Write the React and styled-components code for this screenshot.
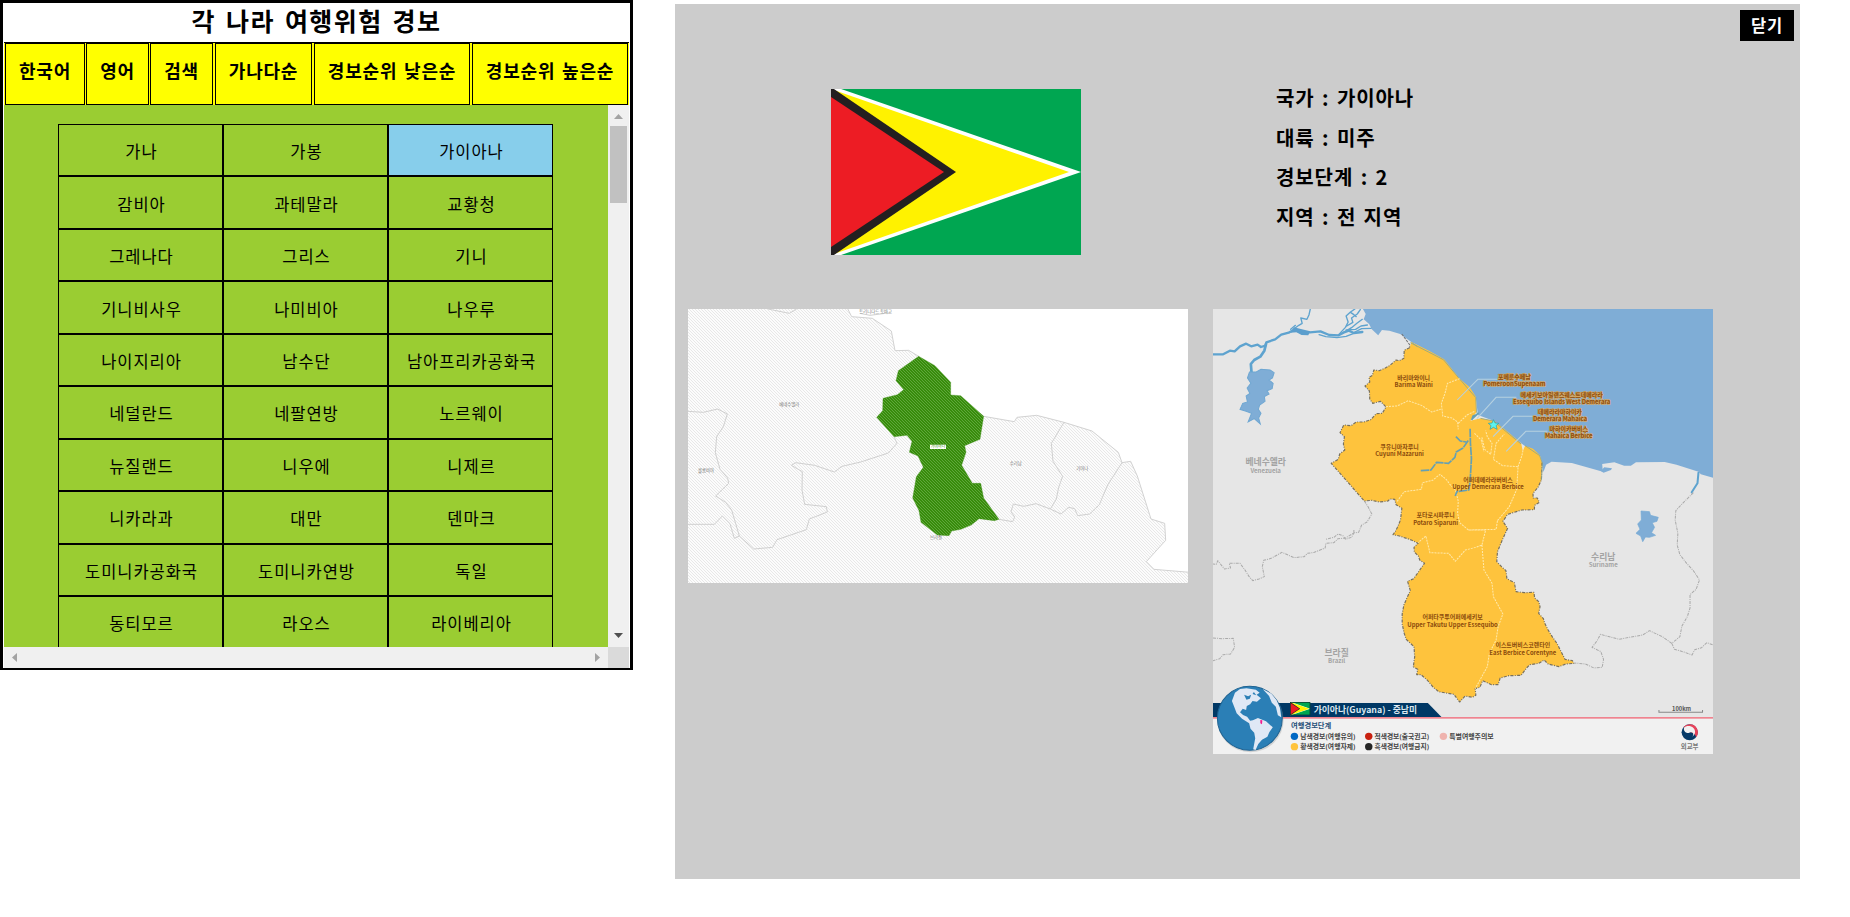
import React from "react";
import styled, { createGlobalStyle } from "styled-components";

const KR = '"Noto Sans CJK KR", "Noto Sans", sans-serif';

const GlobalStyle = createGlobalStyle`
  * { box-sizing: border-box; }
  body { margin: 0; background: #fff; color: #000; font-family: ${KR}; overflow: hidden; }
`;

const Page = styled.div`
  display: flex;
  align-items: flex-start;
  width: 1850px;
  height: 917px;
`;

const ListPanel = styled.section`
  width: 633px;
  height: 670px;
  border: 3px solid #000;
  border-bottom-width: 2px;
  padding: 0 1px;
  display: flex;
  flex-direction: column;
`;

const Title = styled.h1`
  margin: 0;
  height: 40px;
  border-bottom: 1px solid #000;
  font-size: 25px;
  line-height: 35px;
  letter-spacing: 1.4px;
  word-spacing: 3px;
  text-align: center;
  white-space: nowrap;
`;

const Nav = styled.nav`
  display: flex;
  height: 62px;
  padding: 0 1px;
  background: #ff0;
`;

const NavButton = styled.button`
  width: ${(p) => p.$width}px;
  height: 62px;
  margin: 0 ${(p) => p.$gap}px 0 0;
  padding: 0 0 8px;
  border: 1px solid #000;
  background: #ff0;
  color: #000;
  font: 700 18px ${KR};
  letter-spacing: 0.8px;
  word-spacing: 2px;
  white-space: nowrap;
`;

const ScrollArea = styled.div`
  display: grid;
  grid-template-columns: 604px 21px;
  grid-template-rows: 542px 21px;
`;

const ListView = styled.div`
  overflow: hidden;
  background: yellowgreen;
  padding: 19px 0 0 54px;
`;

const CountryGrid = styled.div`
  display: grid;
  grid-template-columns: repeat(3, 165px);
  grid-auto-rows: 52.45px;
`;

const CountryCell = styled.div`
  display: flex;
  align-items: center;
  justify-content: center;
  padding: 2px 0 0 2px;
  border: 1px solid #000;
  background: ${(p) => (p.$active ? "skyblue" : "transparent")};
  font-size: 16.5px;
  letter-spacing: 0.95px;
  white-space: nowrap;
`;

const ScrollTrack = styled.div`
  display: flex;
  flex-direction: ${(p) => (p.$vertical ? "column" : "row")};
  align-items: center;
  justify-content: space-between;
  background: #f0f0f0;
  padding: ${(p) => (p.$vertical ? "9px 0" : "0 8px")};
`;

const ScrollThumb = styled.div`
  width: 17px;
  height: 77px;
  margin: 7px 0 auto;
  background: #c1c1c1;
`;

const ScrollCorner = styled.div`
  background: #dadada;
`;

const Detail = styled.section`
  width: 1125px;
  height: 875px;
  margin: 4px 0 0 42px;
  background: #ccc;
`;

const DetailHeader = styled.header`
  display: flex;
  justify-content: flex-end;
  height: 85px;
  padding: 6px 6px 0;
`;

const CloseButton = styled.button`
  width: 54px;
  height: 31px;
  padding: 0 0 1px;
  border: 0;
  background: #000;
  color: #fff;
  font: 700 16.5px ${KR};
  letter-spacing: 0.8px;
`;

const Summary = styled.div`
  display: flex;
  height: 220px;
  padding-left: 156px;
`;

const Facts = styled.dl`
  margin: -11px 0 0 195px;
`;

const Fact = styled.div`
  height: 39.7px;
  line-height: 39px;
  font-size: 20px;
  font-weight: 700;
  letter-spacing: 0.9px;
  word-spacing: 2px;
  white-space: pre;
`;

const Maps = styled.div`
  display: flex;
  align-items: flex-start;
  gap: 25px;
  padding-left: 13px;
`;

const Drawing = styled.svg`
  display: block;
  flex: none;
  overflow: hidden;
  font-family: ${KR};
`;

const NAV = [
  ["한국어", 80, 1],
  ["영어", 63, 1],
  ["검색", 63, 2],
  ["가나다순", 97, 2],
  ["경보순위 낮은순", 156, 2],
  ["경보순위 높은순", 156, 0],
];

const COUNTRIES = [
  "가나", "가봉", "가이아나",
  "감비아", "과테말라", "교황청",
  "그레나다", "그리스", "기니",
  "기니비사우", "나미비아", "나우루",
  "나이지리아", "남수단", "남아프리카공화국",
  "네덜란드", "네팔연방", "노르웨이",
  "뉴질랜드", "니우에", "니제르",
  "니카라과", "대만", "덴마크",
  "도미니카공화국", "도미니카연방", "독일",
  "동티모르", "라오스", "라이베리아",
];

const FACTS = ["국가 : 가이아나", "대륙 : 미주", "경보단계 : 2", "지역 : 전 지역"];

const Arrow = ({ dir, color }) => {
  const d = { up: "M0 5L4.5 0L9 5Z", down: "M0 0H9L4.5 5Z", left: "M5 0V9L0 4.5Z", right: "M0 0V9L5 4.5Z" }[dir];
  const tall = dir === "left" || dir === "right";
  return (
    <svg width={tall ? 5 : 9} height={tall ? 9 : 5}>
      <path d={d} fill={color} />
    </svg>
  );
};

const FlagShapes = () => (
  <>
    <rect width="250" height="166" fill="#00a651" />
    <path d="M0 -3.5L250 83L0 169.500Z" fill="#fff" />
    <path d="M0 0L238 83L0 166Z" fill="#fff200" />
    <path d="M0 -2L125 83L0 168Z" fill="#231f20" />
    <path d="M0 8L113 83L0 158Z" fill="#ed1c24" />
  </>
);

const OUTLINE =
  "716,169 765,197 812,247 812,285 842,287 911,349 900,418 854,437 858,457 845,496 877,550 902,550 911,594 957,658 943,662 897,656 874,675 843,688 815,693 807,707 772,705 723,667 717,632 698,594 709,530 730,502 714,468 688,457 696,424 681,406 642,410 590,352 608,332 609,295 652,284 671,269 648,242 655,212";

const LocationMap = () => (
  <Drawing width="500" height="274" viewBox="24 27 1500 822">
    <defs>
      <pattern id="hatch" width="9" height="9" patternUnits="userSpaceOnUse">
        <rect width="9" height="9" fill="#fcfcfc" />
        <path d="M-2 -2L11 11M-2 7L2 11M7 -2L11 2" stroke="#dedede" strokeWidth="2" />
      </pattern>
      <pattern id="greenHatch" width="9" height="9" patternUnits="userSpaceOnUse">
        <rect width="9" height="9" fill="#378c0b" />
        <path d="M-2 -2L11 11" stroke="#69ac47" strokeWidth="2.4" />
      </pattern>
    </defs>
    <rect x="24" y="27" width="1500" height="822" fill="#fff" />
    <path
      d="M24 20H500L515 50L577 55L634 93L645 152L686 151L716 169L812 285L911 349L1003 365L1011 352L1070 346L1152 367L1236 393L1315 457L1326 488L1352 484L1372 528L1413 657L1454 670L1457 721L1399 785L1422 808L1530 817V855H18V20Z"
      fill="url(#hatch)"
      stroke="#d2d2d2"
      strokeWidth="3"
    />
    <path
      d="M264 27L328 40L350 27M540 40L570 46L632 38M24 334L70 337L113 327L142 342L130 380L110 410L106 458L120 508L143 534L146 550L107 588L137 607L155 630L178 708L163 715L150 671L127 648L103 673H24M178 708L221 747L278 742L291 719L379 689L388 657L442 636L439 620L374 613L366 570L367 515L334 496L347 488L404 496L463 516L486 499L542 486L625 459L651 430L642 410M1152 367L1114 430L1119 484L1148 529L1136 562L1129 597L1111 627L1143 642L1166 622L1184 626L1193 647L1229 642L1258 614L1283 555L1326 488M1111 627L1068 611L1031 619L1000 612L993 635L1004 651L998 665L957 658"
      fill="none"
      stroke="#d0d0d0"
      strokeWidth="3"
    />
    <polygon points={OUTLINE} fill="url(#greenHatch)" stroke="#378c0b" strokeWidth="1" />
    <rect x="750" y="434" width="48" height="13" fill="#fff" />
    <g fontSize="13" fill="#777" textAnchor="middle">
      <text x="587" y="39">트리니다드 토바고</text>
      <text x="328" y="317">베네수엘라</text>
      <text x="78" y="517">콜롬비아</text>
      <text x="774" y="445" fontSize="12" fill="#378c0b">가이아나</text>
      <text x="1007" y="496">수리남</text>
      <text x="1207" y="510">기아나</text>
      <text x="768" y="717">브라질</text>
    </g>
  </Drawing>
);

const REGIONS = [
  [632, 240, "바리마와이니", 262, "Barima Waini", 113],
  [590, 446, "쿠유니마자루니", 468, "Cuyuni Mazaruni", 144],
  [852, 546, "어퍼데메라라버비스", 568, "Upper Demerara Berbice", 212],
  [697, 652, "포타로시파루니", 674, "Potaro Siparuni", 132],
  [747, 958, "어퍼타쿠투어퍼에세키보", 980, "Upper Takutu Upper Essequibo", 268],
  [955, 1042, "이스트버비스코렌타인", 1064, "East Berbice Corentyne", 198],
];

const CALLOUTS = [
  [930, 236, "포메룬수페남", 258, "PomeroonSupenaam", 184],
  [1070, 290, "에세키보아일랜즈웨스트데메라라", 312, "Essequibo Islands West Demerara", 288],
  [1065, 343, "데메라라마하이카", 364, "Demerara Mahaica", 160],
  [1091, 393, "마하이카버비스", 414, "Mahaica Berbice", 141],
];

const NEIGHBOURS = [
  [194, 496, "베네수엘라", 518, "Venezuela", 120],
  [1193, 779, "수리남", 800, "Suriname", 72],
  [404, 1068, "브라질", 1090, "Brazil", 72],
];

const LEGEND = [
  [279, 1309, "#0068c4", "남색경보(여행유의)", 164],
  [279, 1340, "#ffc33c", "황색경보(여행자제)", 164],
  [499, 1309, "#c8200f", "적색경보(출국권고)", 162],
  [499, 1340, "#262626", "흑색경보(여행금지)", 162],
  [720, 1309, "#efb3ae", "특별여행주의보", 132],
];

const LAND_BORDER =
  "M620 143L604 151L603 175L590 182L580 180L562 196L548 204L530 212L514 210L510 226L500 232L502 246L488 258L501 273L502 297L511 310L534 304L550 321L539 340L521 341L505 359L484 366L462 366L447 377L425 375L414 398L427 410L424 432L428 450L413 462L409 478L388 490L486 603L508 601L530 606L556 603L562 597L576 598L580 614L597 625L593 660L584 682L578 694L571 704L590 708L625 720L645 730L633 742L634 756L646 768L650 780L664 790L646 816L632 836L614 844L622 872L612 894L603 915L598 942L598 972L604 1000L610 1018L633 1040L635 1070L631 1100L644 1108L641 1124L654 1124L672 1140L690 1162L706 1175L751 1183L768 1206L784 1188L806 1192L816 1186L814 1166L828 1162L836 1142L862 1154L882 1154L888 1134L914 1127L950 1126L966 1104L976 1094L1002 1090L1018 1080L1030 1092L1062 1100L1082 1092L1106 1090L1102 1082L1080 1078L1066 1050L1056 1030L1042 1010L1030 990L1020 970L1016 956L1002 940L1006 920L1002 905L990 894L988 877L960 878L935 875L930 848L908 836L905 812L892 800L878 785L880 755L896 716L910 685L896 664L910 643L952 630L989 629L990 616L1004 607L998 594L986 594L985 580L1000 562L1010 540L1012 488";
const COAST =
  "L1005 465L985 446L962 437L955 452L950 430L918 402L890 379L870 362L830 355L800 362L818 336L816 290L798 262L768 236L722 178L680 154L625 126Z";

const AlertMap = () => (
  <Drawing width="500" height="445" viewBox="38 27 1480 1335" preserveAspectRatio="none">
    <rect x="38" y="27" width="1480" height="1335" fill="#e6e6e6" />
    <path
      d="M478 20L490 42L484 58L500 72L508 88L527 106L538 90L560 92L592 102L625 126L720 178L768 236L816 292L822 345L868 362L950 430L1008 470L1016 516L1024 494L1040 485L1100 489L1192 515L1190 492L1226 487L1255 497L1275 497L1290 487L1375 486L1410 494L1475 515L1482 523L1518 533V20Z"
      fill="#7fadd6"
    />
    <path d="M1186 513L1196 502L1219 505L1216 510L1194 518Z" fill="#7fadd6" />
    <g fill="none" stroke="#5ea3cf" strokeLinecap="round" strokeLinejoin="round">
      <path d="M38 163L68 163L88 152L102 154L118 139L136 131L151 139L170 134L180 141L193 137L196 127L222 118L240 104L262 98L276 90L300 96L325 97L356 94L382 105L410 106L424 98L440 92L455 99L480 96" strokeWidth="7" />
      <path d="M195 132L190 152L178 170L160 180L150 192L152 217" strokeWidth="8" />
      <path d="M276 88L292 76L302 70L298 54L316 58L322 45L326 27M268 88L282 76M352 104L372 110L405 113L432 109L455 100M408 106L430 82L438 66L432 48L445 36L458 27M434 78L452 67L448 54L465 42L474 29M420 100L448 83L464 70L480 58M432 90L460 88L476 78L495 75M458 96L478 86L506 85M445 37L455 44L462 50" strokeWidth="4" />
      <path d="M1475 518L1472 550L1455 577" strokeWidth="6" />
    </g>
    <path d="M278 82L298 87L326 94L320 106L300 105L285 97L268 98Z" fill="#5b9ecd" />
    <path d="M146 216L166 216L180 208L207 210L219 218L214 234L204 240L216 250L213 266L198 272L204 282L190 290L192 304L176 315L172 328L180 340L173 354L178 372L160 356L142 366L152 340L136 334L118 328L126 310L140 306L136 288L147 280L139 264L150 250L140 234Z" fill="#7fadd6" stroke="#6fa7d2" strokeWidth="3" />
    <path d="M1305 633L1330 635L1333 646L1356 652L1352 664L1338 668L1345 682L1336 698L1348 706L1330 712L1318 711L1310 725L1304 708L1290 700L1302 688L1295 672L1306 660Z" fill="#7fadd6" stroke="#74aad5" strokeWidth="2" />

    <g fill="none" stroke="#aaa" strokeWidth="3" strokeDasharray="9 3 3 3" strokeLinejoin="round">
      <path d="M486 603L498 622L508 642L494 666L478 675L469 697L455 699L448 712L430 718L424 708L408 702L396 712L372 718M455 690L455 699L430 714L408 716L396 728L372 730L370 744L338 757L318 760L308 770L278 773L242 757L228 765L210 775L188 781L184 800L190 830L174 837L156 842L145 830L134 812L118 790L86 790L90 804L72 807L52 782L48 793L38 792" />
      <path d="M38 1014L65 1016L98 1015L102 1042L90 1062L68 1064L58 1076L38 1082" />
      <path d="M1460 578L1428 610L1408 632L1406 660L1414 700L1412 735L1420 764L1440 790L1460 812L1478 840L1468 868L1450 884L1450 924L1442 950L1426 978L1420 1010L1396 1030L1404 1048L1432 1056L1456 1065L1464 1049L1484 1043L1500 1028L1518 1035M1396 1030L1368 1010L1330 992L1310 1005L1270 1012L1240 1018L1185 1003L1175 1022L1160 1042L1186 1055L1194 1078L1190 1102L1166 1104L1140 1092L1108 1089" />
    </g>

    <path d={LAND_BORDER + COAST} fill="#fec33d" />
    <path d={LAND_BORDER} fill="none" stroke="#77705f" strokeWidth="3.500" strokeDasharray="9 4 3 4" strokeLinejoin="round" />
    <path d="M597 102L620 134V143" fill="none" stroke="#777" strokeWidth="3" strokeDasharray="8 3" />
    <path d="M622 128L720 179L768 237L816 293L818 338M830 355L868 363L950 432M962 437L1005 467L1013 490L1010 540M626 127L643 140" fill="none" stroke="#8fa788" strokeWidth="2.500" />
    <g fill="none" stroke="#ffe9ab" strokeWidth="3" strokeDasharray="6 3">
      <path d="M550 320L583 318L616 302L655 316L685 336L712 328M768 236L732 250L725 279L714 310L718 348L745 354L762 366L764 388M764 370L790 345L812 334M583 604L604 575L655 568L658 548L688 541L710 523L730 540L738 552L756 570L764 604L762 640L768 668L794 690L876 688L880 662M880 662L915 620L937 568L941 500L895 497L868 478L876 430L900 402M941 500L952 468L958 440M834 412L842 448L860 463L864 430L850 410L845 392M812 400L832 420L840 455M794 690H845L834 735L816 742L785 750L755 784L736 760L680 758L668 708L645 728M834 735L840 810L864 850L868 890L896 942L882 980L876 1020L856 1060L850 1100L814 1166" />
    </g>
    <path d="M653 512L683 510L700 487L735 490L754 472L758 456L778 444L794 421M757 410L770 423L788 426M799 386L800 430L803 475L799 545L795 570L760 575L755 588M804 360L808 348L818 344M806 356L826 337" fill="none" stroke="#65a0b3" strokeWidth="5" strokeDasharray="25 2" strokeLinejoin="round" />
    <path d="M761 300L822 238H890M819 356L876 292H936M867 410L926 349H992M906 454L964 394H1028" fill="none" stroke="#b6d1e0" strokeWidth="3" />
    <path d="M868 359L873 369L884 370L876 377L879 388L868 382L858 388L861 377L853 370L864 369Z" fill="#5cf3ef" stroke="#2b9ca2" strokeWidth="2" />

    <g fontWeight="700" textAnchor="middle" fill="#8a4a0c">
      {REGIONS.map(([x, y, ko, y2, en, w]) => (
        <React.Fragment key={en}>
          <text x={x} y={y} fontSize="18" textLength={ko.length * 16.2} lengthAdjust="spacingAndGlyphs">{ko}</text>
          <text x={x} y={y2} fontSize="18" textLength={w} lengthAdjust="spacingAndGlyphs">{en}</text>
        </React.Fragment>
      ))}
      <g stroke="#d3a560" strokeWidth="4" strokeLinejoin="round" paintOrder="stroke">
        {CALLOUTS.map(([x, y, ko, y2, en, w]) => (
          <React.Fragment key={en}>
            <text x={x} y={y} fontSize="18" textLength={ko.length * 16.2} lengthAdjust="spacingAndGlyphs">{ko}</text>
            <text x={x} y={y2} fontSize="18" textLength={w} lengthAdjust="spacingAndGlyphs">{en}</text>
          </React.Fragment>
        ))}
      </g>
      {NEIGHBOURS.map(([x, y, ko, y2, en, w]) => (
        <g key={en} fill="#a3a3a3">
          <text x={x} y={y} fontSize="26" textLength={w} lengthAdjust="spacingAndGlyphs">{ko}</text>
          <text x={x} y={y2} fontSize="18">{en}</text>
        </g>
      ))}
    </g>

    <path d="M1358 1230V1237H1487V1230" fill="none" stroke="#888" strokeWidth="3" />
    <text x="1425" y="1234" fontSize="17" fontWeight="700" fill="#555" textAnchor="middle" textLength="56" lengthAdjust="spacingAndGlyphs">100km</text>

    <rect x="38" y="1255" width="1480" height="107" fill="#f1f1f1" />
    <path d="M38 1209H674L715 1252H38Z" fill="#003865" />
    <rect x="38" y="1251" width="1480" height="5" fill="#f0838f" />
    <circle cx="149" cy="1259" r="98" fill="#999" opacity="0.35" />
    <circle cx="147" cy="1255" r="96" fill="#2b7fb6" stroke="#1e6291" strokeWidth="3" />
    <path d="M103 1178L118 1167L137 1165L165 1169L176 1178L167 1184L180 1195L168 1205L155 1203L148 1213L138 1218L136 1230L126 1226L118 1237L127 1245L139 1250L148 1262L156 1261L171 1254L195 1264L215 1282L205 1296L199 1310L183 1319L172 1332L164 1350L157 1348L163 1315L160 1298L149 1286L145 1270L124 1256L108 1240L101 1221L94 1203Z" fill="#dfe8f5" />
    <path d="M130 1184L142 1189L151 1184L147 1196L137 1199ZM159 1176L166 1186L155 1182Z" fill="#2b7fb6" />
    <path d="M185 1167L211 1181L226 1200L236 1223L240 1252L230 1246L224 1220L212 1208L204 1188Z" fill="#dfe8f5" />
    <path d="M178 1260L184 1261L183 1273L178 1270Z" fill="#f41c8e" />
    <svg x="266" y="1206" width="60" height="40" viewBox="0 0 250 166" preserveAspectRatio="none">
      <FlagShapes />
      <rect width="250" height="166" fill="none" stroke="#0b3a31" strokeWidth="18" />
    </svg>
    <text x="336" y="1240" fontSize="26" fontWeight="700" fill="#dce8f1" textLength="306" lengthAdjust="spacingAndGlyphs">가이아나(Guyana) - 중남미</text>
    <text x="269" y="1284" fontSize="21" fontWeight="700" fill="#1f4f78" textLength="119" lengthAdjust="spacingAndGlyphs">여행경보단계</text>
    {LEGEND.map(([x, y, color, label, w]) => (
      <g key={label}>
        <circle cx={x} cy={y} r="11" fill={color} />
        <text x={x + 17} y={y + 7} fontSize="19" fontWeight="700" fill="#444" textLength={w} lengthAdjust="spacingAndGlyphs">{label}</text>
      </g>
    ))}
    <circle cx="1449" cy="1297" r="24" fill="#063a68" />
    <path d="M1449 1273A24 24 0 0 1 1468 1312C1466 1303 1460 1298 1452 1297C1440 1296 1434 1286 1431 1281A24 24 0 0 1 1449 1273Z" fill="#e8425a" />
    <path d="M1432 1284C1438 1276 1452 1276 1460 1284C1468 1292 1466 1304 1457 1310C1464 1300 1456 1294 1448 1298C1440 1302 1430 1294 1432 1284Z" fill="#f1f1f1" />
    <text x="1449" y="1346" fontSize="19" fontWeight="700" fill="#777" textAnchor="middle">외교부</text>
  </Drawing>
);

export default function App() {
  return (
    <>
      <GlobalStyle />
      <Page>
        <ListPanel>
          <Title>각 나라 여행위험 경보</Title>
          <Nav>
            {NAV.map(([label, width, gap]) => (
              <NavButton key={label} $width={width} $gap={gap}>{label}</NavButton>
            ))}
          </Nav>
          <ScrollArea>
            <ListView>
              <CountryGrid>
                {COUNTRIES.map((name) => (
                  <CountryCell key={name} $active={name === "가이아나"}>{name}</CountryCell>
                ))}
              </CountryGrid>
            </ListView>
            <ScrollTrack $vertical>
              <Arrow dir="up" color="#a3a3a3" />
              <ScrollThumb />
              <Arrow dir="down" color="#505050" />
            </ScrollTrack>
            <ScrollTrack>
              <Arrow dir="left" color="#a3a3a3" />
              <Arrow dir="right" color="#a3a3a3" />
            </ScrollTrack>
            <ScrollCorner />
          </ScrollArea>
        </ListPanel>
        <Detail>
          <DetailHeader>
            <CloseButton>닫기</CloseButton>
          </DetailHeader>
          <Summary>
            <Drawing width="250" height="166" viewBox="0 0 250 166">
              <FlagShapes />
            </Drawing>
            <Facts>
              {FACTS.map((fact) => (
                <Fact key={fact}>{fact}</Fact>
              ))}
            </Facts>
          </Summary>
          <Maps>
            <LocationMap />
            <AlertMap />
          </Maps>
        </Detail>
      </Page>
    </>
  );
}
